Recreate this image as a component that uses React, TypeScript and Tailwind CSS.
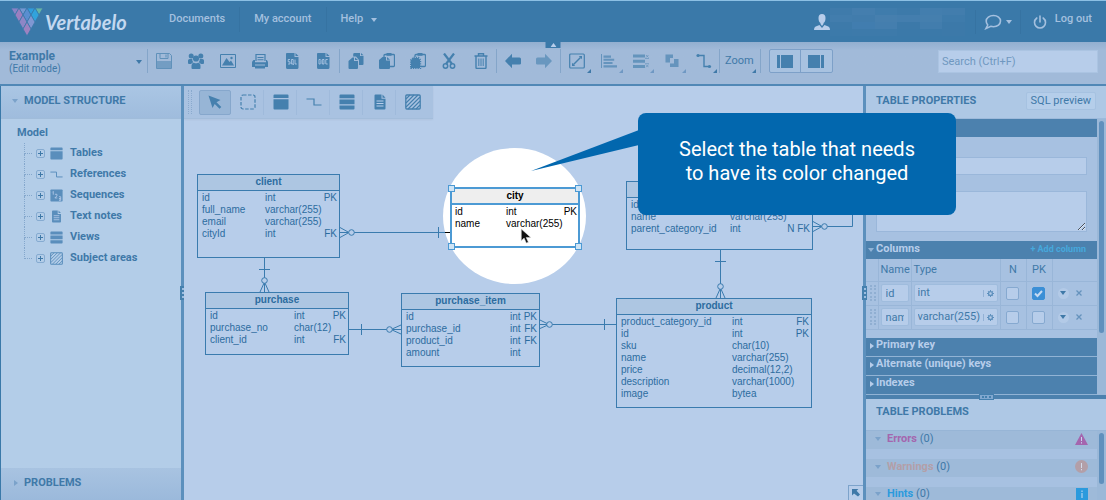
import { useState } from "react";
import type { ReactNode } from "react";

type IconName =
  | "save" | "users" | "image" | "print" | "sql" | "doc"
  | "copy" | "paste" | "pasteSpecial" | "cut" | "trash"
  | "undo" | "redo" | "line" | "align" | "distribute" | "arrange" | "route"
  | "pointer" | "marquee" | "table" | "reference" | "view" | "note" | "area" | "sequence";

// All icons are drawn on a 16x16 grid with currentColor
const ICONS: Record<IconName, ReactNode> = {
  save: (
    <g opacity=".7">
      <path d="M.5.5h13l2 2v13H.5z" fill="none" stroke="currentColor" />
      <path d="M1 8h14v7H1z" opacity=".7" />
      <path d="M4 .5v5h8v-5" fill="none" stroke="currentColor" />
      <path d="M9.5 1.5h1v3h-1z" />
    </g>
  ),
  users: (
    <>
      <circle cx="3.2" cy="3" r="2.5" />
      <circle cx="12.8" cy="3" r="2.5" />
      <circle cx="8" cy="5.5" r="3.1" />
      <path d="M0 10V7.5Q0 6 1.7 6h2.6Q4 9 5.5 9.3 3.6 9.8 3.2 11H1Q0 11 0 10zM16 10V7.5Q16 6 14.3 6h-2.6Q12 9 10.5 9.3 12.4 9.8 12.8 11H15Q16 11 16 10zM3.5 15v-2.5Q3.5 10 6 9.7 8 11 10 9.7q2.5.3 2.5 2.8V15q0 1-1 1h-7q-1 0-1-1z" />
    </>
  ),
  image: (
    <>
      <path d="M.5 1.5h15v13H.5z" fill="none" stroke="currentColor" />
      <path d="M2 12.5 6.500 5l3 4 1.500-1.500 3 5z" />
      <circle cx="11.5" cy="5" r="1.2" />
    </>
  ),
  print: (
    <>
      <path d="M4 8V1.500h9V8" fill="none" stroke="currentColor" strokeWidth="1.2" />
      <path d="M5.500 4h6v1h-6zM5.500 6.200h6v1h-6zM1.500 7H3v2.200h11V7h.8Q16 8 16 9.500V14H0V9.500Q0 8 1.500 7z" />
      <path d="M3 14h10v1.500H3z" />
      <path d="M3 11.500h10v1H3z" fill="#a1bad9" />
    </>
  ),
  sql: (
    <>
      <path d="M2.500 0h8v4h4v10.500Q14.500 16 13 16H3.500Q2 16 2 14.500V1.500Q2 0 2.500 0zM11.500 0l3 3h-3z" />
      <path d="M6 6.500H4.200v2.300H6V11H4M7.400 6.500h1.800V11H7.400zM9 11l.8 1M11 6.500V11h1.800" fill="none" stroke="#b7cdea" strokeWidth=".8" />
    </>
  ),
  doc: (
    <>
      <path d="M2.500 0h8v4h4v10.500Q14.500 16 13 16H3.500Q2 16 2 14.500V1.500Q2 0 2.500 0zM11.500 0l3 3h-3z" />
      <path d="M4 6.500h1.300l.6.8v3l-.6.7H4zM7.300 6.500H9V11H7.300zM12.700 6.500h-1.900V11h1.900" fill="none" stroke="#b7cdea" strokeWidth=".8" />
    </>
  ),
  copy: (
    <>
      <path d="M6.500 0H12v3h3.500v8q0 1-1 1H11V7L8 3.500H5.200V1.300Q5.200 0 6.500 0zM13 0l2.500 2.300H13z" />
      <path d="M4.500 4.500H6V8h4v7q0 1-1 1H1.500q-1 0-1-1V8zM7 4.500 10 7H7z" />
    </>
  ),
  paste: (
    <>
      <path d="M5 4V2.500Q5 1.500 6 1.500h8.500q1 0 1 1v10q0 1-1 1H11" fill="none" stroke="currentColor" strokeWidth="1.3" />
      <path d="M7.500 0h5v2.800h-5zM3.500 4H7v3.500h4V15q0 1-1 1H1q-1 0-1-1V7zM8 4l3 2.700H8z" />
    </>
  ),
  pasteSpecial: (
    <>
      <path d="M5 4V2.500Q5 1.500 6 1.500h8.500q1 0 1 1v10q0 1-1 1H11" fill="none" stroke="currentColor" strokeWidth="1.3" />
      <path d="M7.500 0h5v2.800h-5zM3.500 5h5l1.500 2v8H1V7z" />
      <path d="M3.500 4.500h5l2 2.500v8.500H.7V7z" fill="none" stroke="currentColor" strokeWidth="1.4" strokeDasharray="1.3 1" />
    </>
  ),
  cut: (
    <>
      <path d="M3 .5 11 11M13 .5 5 11" fill="none" stroke="currentColor" strokeWidth="2.2" />
      <circle cx="4.5" cy="13" r="2.2" fill="none" stroke="currentColor" strokeWidth="1.5" />
      <circle cx="11.5" cy="13" r="2.2" fill="none" stroke="currentColor" strokeWidth="1.5" />
    </>
  ),
  trash: (
    <>
      <path d="M1.500 3h13M5.500 3V.7h5V3M3 3v11.500q0 1 1 1h8q1 0 1-1V3" fill="none" stroke="currentColor" strokeWidth="1.4" />
      <path d="M5.800 5.500V13M8 5.500V13M10.200 5.500V13" stroke="currentColor" />
    </>
  ),
  undo: <path d="M0 8 7 .8V4.500h7.500Q16 4.500 16 6v4.500q0 1-1.500 1H7v3.700z" />,
  redo: <path d="M16 8 9 .8V4.500H1.500Q0 4.500 0 6v4.500q0 1 1.500 1H9v3.700z" opacity=".6" />,
  line: (
    <>
      <rect x=".7" y="1" width="14.6" height="14" rx="1" fill="none" stroke="currentColor" strokeWidth="1.2" />
      <path d="M4.500 11.500 11.500 4.500" fill="none" stroke="currentColor" strokeWidth="1.5" />
      <path d="M3 13v-3.200L6.200 13zM13 3v3.200L9.800 3z" />
    </>
  ),
  align: <path d="M0 1h1v14H0zM2.500 2.500H10v2.300H2.500zM2.500 5.800h10.700v2H2.500zM2.500 9h9v2h-9zM2.500 12.200H16v2.300H2.500z" opacity=".65" />,
  distribute: (
    <g opacity=".65">
      <path d="M0 1.500h12v3H0zM0 6.700h12v3H0zM0 12h12v3H0z" />
      <path d="M12 5.500h4M12 10.700h4M13 2l2.500 2.500M15.500 2 13 4.500M13 11.700l2.500 2.500M15.500 11.700 13 14.200" fill="none" stroke="currentColor" strokeWidth=".7" />
    </g>
  ),
  arrange: <path d="M1.500 1.500H9V5H6v4.500H1.500zM10 6h4.500v8H6v-3.500h4z" opacity=".65" />,
  route: (
    <>
      <path d="M2 2.500h6v11h5" fill="none" stroke="currentColor" strokeWidth="1.4" />
      <circle cx="2" cy="2.500" r="1.6" />
      <circle cx="13.5" cy="13.5" r="1.6" />
    </>
  ),
  pointer: <path d="m1.500 1.500 12 4.500-4 2.200 4.800 4.800-1.800 1.800-4.800-4.800L5.500 14z" />,
  marquee: <rect x="1" y="1" width="14" height="14" rx="2" fill="none" stroke="currentColor" strokeWidth="1.2" strokeDasharray="3.5 1.5" />,
  table: <path d="M1.500.5h13q1 0 1 1V4H.5V1.500q0-1 1-1zM.5 5.300h15v9.200q0 1-1 1h-13q-1 0-1-1z" />,
  reference: <path d="M.5 5h7.500v6h7.500" fill="none" stroke="currentColor" strokeWidth="1.2" />,
  view: <path d="M1.500.5h13q1 0 1 1V4.200H.5V1.500q0-1 1-1zM.5 5.500h15v4.700H.5zM.5 11.500h15v3q0 1-1 1h-13q-1 0-1-1z" />,
  note: (
    <>
      <path d="M3.500.5h6v4.300h4v9.700q0 1-1 1h-9q-1 0-1-1v-13q0-1 1-1zM10.500.5l3 3.200h-3z" />
      <path d="M4.500 7h7M4.500 9.500h7M4.500 12h7" stroke="#b7cdea" />
    </>
  ),
  area: (
    <>
      <rect x=".8" y="1" width="14.4" height="14" rx="1" fill="none" stroke="currentColor" strokeWidth="1.3" />
      <path d="m1 5 4-4M1 9l8-8M1 13l12-12M3 15 15 3M7 15l8-8M11 15l4-4" stroke="currentColor" strokeWidth="1.1" />
    </>
  ),
  sequence: (
    <>
      <rect x=".5" y=".5" width="15" height="15" rx="1" />
      <path d="M3 4l1-1v4M6 6.500h2.500v2L6 11h3M11 9.500h2.200V12H11h2.200v2H11" fill="none" stroke="#b7cdea" />
    </>
  ),
};

function Icon({ name, className = "h-4 w-4" }: { name: IconName; className?: string }) {
  return (
    <svg viewBox="0 0 16 16" fill="currentColor" className={className} aria-hidden="true">
      {ICONS[name]}
    </svg>
  );
}

function Caret({ className = "" }: { className?: string }) {
  return (
    <svg viewBox="0 0 6 4" fill="currentColor" className={`h-1 w-1.5 shrink-0 ${className}`} aria-hidden="true">
      <path d="M0 0h6L3 4z" />
    </svg>
  );
}

function CaretRight() {
  return (
    <svg viewBox="0 0 4 6" fill="currentColor" className="h-1.5 w-1 shrink-0" aria-hidden="true">
      <path d="M0 0v6l4-3z" />
    </svg>
  );
}

function ToolButton({ icon, label, width = "w-8", menu = "" }: { icon: IconName; label: string; width?: string; menu?: string }) {
  return (
    <button type="button" aria-label={label} className={`relative flex h-6 items-center justify-center text-[#4580ae] ${width}`}>
      <Icon name={icon} />
      {menu && (
        <svg viewBox="0 0 4 4" className={`absolute right-0.5 bottom-0 h-1 w-1 ${menu}`} fill="currentColor" aria-hidden="true">
          <path d="M4 0v4H0z" />
        </svg>
      )}
    </button>
  );
}

/* ---------- top bar ---------- */

const LOGO_TILES = [
  { points: "0,0 8,0 4,7", fill: "#8a83c6" },
  { points: "8,0 16,0 12,7", fill: "#7598d2" },
  { points: "16,0 24,0 20,7", fill: "#2f9ddd" },
  { points: "24,0 32,0 28,7", fill: "#68b4a4" },
  { points: "8,0 12,7 8,14 4,7", fill: "#9c7fc0" },
  { points: "16,0 20,7 16,14 12,7", fill: "#5a8ed0" },
  { points: "24,0 28,7 24,14 20,7", fill: "#31a3dc" },
  { points: "12,7 16,14 12,21 8,14", fill: "#8e86c6" },
  { points: "20,7 24,14 20,21 16,14", fill: "#7f97d2" },
  { points: "16,14 20,21 16,28 12,21", fill: "#9d82c0" },
];

const BLUR_BLOCKS = [
  "bg-[#3f7bab]", "bg-[#447eae]", "bg-[#3f7cac]", "bg-[#3d7aaa]", "bg-[#437eae]", "bg-[#427dad]",
  "bg-[#427dad]", "bg-[#417cac]", "bg-[#467fae]", "bg-[#447eae]", "bg-[#457fae]", "bg-[#3e7bab]",
  "bg-[#3d7aaa]", "bg-[#417daf]", "bg-[#447eae]", "bg-[#3c79a9]", "bg-[#427dad]", "bg-[#3c79a9]",
  "bg-[#3c7aaa]", "bg-[#3d7aaa]", "bg-[#3d7aaa]", "bg-[#3b79a9]", "bg-[#3b79a9]", "bg-[#3c79a9]",
];

function TopBar() {
  return (
    <header className="flex h-[42px] shrink-0 items-center border-t border-[#8cc0e4] bg-[#3a79a9] text-[#a4c0df]">
      <a href="#home" className="flex w-[155px] items-center gap-0.5 pl-[11px]">
        <svg viewBox="0 0 32 28" className="h-7 w-8 shrink-0" aria-hidden="true">
          {LOGO_TILES.map((tile) => (
            <polygon key={tile.points} points={tile.points} fill={tile.fill} stroke="#3a79a9" strokeWidth="0.8" />
          ))}
        </svg>
        <span className="font-[Lato,sans-serif] text-xl leading-6 font-bold text-[#c3d8f0] italic">Vertabelo</span>
      </a>
      <nav className="flex items-center pb-1 font-medium">
        <a href="#documents" className="border-r border-[#3673a2] px-3.5 py-1">Documents</a>
        <a href="#account" className="border-r border-[#3673a2] px-3.5 py-1">My account</a>
        <a href="#help" className="flex items-center gap-2 px-3.5 py-1">
          Help <Caret />
        </a>
      </nav>
      <div className="ml-auto flex items-center pr-3.5">
        <svg viewBox="0 0 16 16" fill="currentColor" className="h-4 w-4 text-[#b7cdea]" aria-hidden="true">
          <path d="M8 0q3.500 0 3.500 4T9.500 9v1L8 12l-1.500-2V9q-2-1-2-5T8 0zM0 16q0-3.500 3-4l2.500-1L8 14l2.500-3 2.500 1q3 .5 3 4z" />
        </svg>
        <div className="mr-2.5 grid w-[135px] grid-cols-6">
          {BLUR_BLOCKS.map((color, i) => (
            <span key={i} className={`h-[7px] ${color}`} />
          ))}
        </div>
        <button type="button" aria-label="Messages" className="flex items-center gap-1 border-x border-[#3673a2] px-2 py-1">
          <svg viewBox="0 0 18 16" className="h-4 w-[18px]" fill="none" stroke="currentColor" strokeWidth="1.6" aria-hidden="true">
            <path d="M9.500 1.500c4 0 7 2.300 7 5.500s-3 5.700-7 5.700q-1.500 0-2.700-.4L2 14.500l1.700-3.500Q2.200 9.300 2.200 7c0-3.200 3.300-5.500 7.300-5.500z" />
          </svg>
          <Caret />
        </button>
        <a href="#logout" className="flex items-center gap-2 pl-3 font-medium">
          <svg viewBox="0 0 14 14" className="h-3.5 w-3.5" fill="none" stroke="currentColor" strokeWidth="1.6" strokeLinecap="round" aria-hidden="true">
            <path d="M7 1v6M3.800 3Q1.500 4.700 1.500 7.500a5.500 5.500 0 0 0 11 0Q12.500 4.700 10.200 3" />
          </svg>
          <span className="pb-1">Log out</span>
        </a>
      </div>
    </header>
  );
}

function Toolbar() {
  return (
    <div className="relative flex h-11 shrink-0 items-center border-b-2 border-[#5188b6] bg-linear-to-b from-[#92afd0] via-[#a1bad9] via-20% to-[#a1bad9] pb-1">
      <button type="button" aria-label="Collapse header" className="absolute top-0 left-1/2 flex h-[6px] w-[15px] -translate-x-1/2 items-center justify-center bg-[#3a79a9] text-[#b7cdea]">
        <Caret className="rotate-180" />
      </button>
      <button type="button" className="flex w-[147px] items-center justify-between pt-0.5 pr-[5px] pl-[9px] text-left leading-3">
        <span>
          <span className="block text-xs leading-[14px] font-bold">Example</span>
          <span className="block text-[10px]">(Edit mode)</span>
        </span>
        <Caret />
      </button>
      <div className="flex border-x border-[#84a5c9]">
        <ToolButton icon="save" label="Save" />
        <ToolButton icon="users" label="Share" />
        <ToolButton icon="image" label="Export image" />
        <ToolButton icon="print" label="Print" />
        <ToolButton icon="sql" label="SQL script" width="w-[31px]" />
        <ToolButton icon="doc" label="Documentation" />
      </div>
      <div className="flex border-r border-[#84a5c9]">
        <ToolButton icon="copy" label="Copy" width="w-[31px]" />
        <ToolButton icon="paste" label="Paste" width="w-[31px]" />
        <ToolButton icon="pasteSpecial" label="Paste special" width="w-[31px]" />
        <ToolButton icon="cut" label="Cut" />
        <ToolButton icon="trash" label="Delete" width="w-[31px]" />
      </div>
      <div className="flex border-r border-[#84a5c9]">
        <ToolButton icon="undo" label="Undo" width="w-[31px]" />
        <ToolButton icon="redo" label="Redo" />
      </div>
      <div className="flex border-r border-[#84a5c9]">
        <ToolButton icon="line" label="Line style" menu="text-[#3f79a8]" />
        <ToolButton icon="align" label="Align" menu="text-[#6f98c3]" />
        <ToolButton icon="distribute" label="Distribute" width="w-[31px]" menu="text-[#6f98c3]" />
        <ToolButton icon="arrange" label="Arrange" menu="text-[#6f98c3]" />
        <ToolButton icon="route" label="Route" width="w-[31px]" menu="text-[#3f79a8]" />
      </div>
      <button type="button" className="relative h-6 border-r border-[#84a5c9] pr-1.5 pl-[5px]">
        Zoom
        <svg viewBox="0 0 4 4" className="absolute right-1 bottom-0 h-1 w-1" fill="currentColor" aria-hidden="true">
          <path d="M4 0v4H0z" />
        </svg>
      </button>
      <div className="ml-2 flex rounded-xs border border-[#7da0c8] bg-[#a8c2e0]">
        <button type="button" aria-label="Toggle left panel" className="flex h-[22px] w-[31px] items-center justify-center gap-px border-r border-[#7da0c8]">
          <span className="h-[13px] w-[3px] bg-[#4580ae]" />
          <span className="h-[13px] w-3 bg-[#4580ae]" />
        </button>
        <button type="button" aria-label="Toggle right panel" className="flex h-[22px] w-[31px] items-center justify-center gap-px">
          <span className="h-[13px] w-3 bg-[#4580ae]" />
          <span className="h-[13px] w-[3px] bg-[#4580ae]" />
        </button>
      </div>
      <input
        type="search"
        aria-label="Search"
        placeholder="Search (Ctrl+F)"
        className="mr-2 ml-auto h-[23px] w-40 border border-[#abc4e2] bg-[#b7cdea] px-[3px] placeholder:text-[#6f98c0]"
      />
    </div>
  );
}

/* ---------- left panel ---------- */

const TREE: { label: string; icon: IconName }[] = [
  { label: "Tables", icon: "table" },
  { label: "References", icon: "reference" },
  { label: "Sequences", icon: "sequence" },
  { label: "Text notes", icon: "note" },
  { label: "Views", icon: "view" },
  { label: "Subject areas", icon: "area" },
];

function ModelPanel() {
  return (
    <aside className="flex w-[181px] shrink-0 flex-col border-l border-[#3a79a9] bg-[#b3cde8]">
      <h2 className="flex h-[33px] shrink-0 items-center gap-1.5 border-b border-[#a0bcda] bg-linear-to-b from-[#aac6e4] to-[#9fbcdd] pb-0.5 pl-[11px] font-bold">
        <Caret className="text-[#7ba2ca]" /> MODEL STRUCTURE
      </h2>
      <div className="flex-1 pt-1.5">
        <p className="pl-4 leading-4 font-bold">Model</p>
        <ul className="ml-[23px] pt-0.5">
          {TREE.map((item, i) => (
            <li key={item.label} className="flex h-[21px] items-center font-bold">
              <span className="flex h-full w-2 flex-col">
                <span className="h-1/2 border-b border-l border-dotted border-[#84a7cc]" />
                {i < TREE.length - 1 && <span className="h-1/2 border-l border-dotted border-[#84a7cc]" />}
              </span>
              <button
                type="button"
                aria-label={`Expand ${item.label}`}
                className="ml-1 flex h-[9px] w-[9px] items-center justify-center rounded-xs border border-[#86abd1]"
              >
                <svg viewBox="0 0 5 5" className="h-[5px] w-[5px]" stroke="currentColor" aria-hidden="true">
                  <path d="M2.500 0v5M0 2.500h5" />
                </svg>
              </button>
              <Icon name={item.icon} className="mr-[7px] ml-[5px] h-[13px] w-[13px] text-[#5a8ebc]" />
              {item.label}
            </li>
          ))}
        </ul>
      </div>
      <h2 className="flex h-8 shrink-0 items-center gap-1.5 bg-linear-to-b from-[#a8c3e1] to-[#9bb9db] pb-0.5 pl-[13px] font-bold">
        <span className="text-[#7ba2ca]"><CaretRight /></span> PROBLEMS
      </h2>
    </aside>
  );
}

function Splitter() {
  return (
    <div className="flex w-[3px] shrink-0 items-center justify-center bg-[#5c90bd]">
      <span className="relative flex h-3.5 w-[5px] shrink-0 justify-center bg-[#4580ae] py-0.5">
        <span className="border-l-2 border-dotted border-[#9dbde0]" />
      </span>
    </div>
  );
}

/* ---------- canvas ---------- */

interface ModelTable {
  name: string;
  box: string;
  cols: string[];
  rows: string[][];
}

const MODEL_TABLES: ModelTable[] = [
  {
    name: "client",
    box: "left-[13px] top-[88px] h-[84px] w-[143px]",
    cols: ["w-[63px]", "", "w-4"],
    rows: [["id", "int", "PK"], ["full_name", "varchar(255)", ""], ["email", "varchar(255)", ""], ["cityId", "int", "FK"]],
  },
  {
    name: "purchase",
    box: "left-[21px] top-[206px] h-[63px] w-[144px]",
    cols: ["w-[84px]", "", "w-4"],
    rows: [["id", "int", "PK"], ["purchase_no", "char(12)", ""], ["client_id", "int", "FK"]],
  },
  {
    name: "purchase_item",
    box: "left-[217px] top-[207px] h-[74px] w-[139px]",
    cols: ["w-[104px]", "", "w-4"],
    rows: [["id", "int", "PK"], ["purchase_id", "int", "FK"], ["product_id", "int", "FK"], ["amount", "int", ""]],
  },
  {
    name: "category",
    box: "left-[442px] top-[95px] h-[69px] w-[187px]",
    cols: ["w-[99px]", "", "w-6"],
    rows: [["id", "int", "PK"], ["name", "varchar(255)", ""], ["parent_category_id", "int", "N FK"]],
  },
  {
    name: "product",
    box: "left-[432px] top-[212px] h-[110px] w-[196px]",
    cols: ["w-[111px]", "", "w-4"],
    rows: [
      ["product_category_id", "int", "FK"],
      ["id", "int", "PK"],
      ["sku", "char(10)", ""],
      ["name", "varchar(255)", ""],
      ["price", "decimal(12,2)", ""],
      ["description", "varchar(1000)", ""],
      ["image", "bytea", ""],
    ],
  },
];

function TableRows({ table }: { table: ModelTable }) {
  return (
    <table className="mt-px w-full table-fixed leading-3 whitespace-nowrap">
      <colgroup>
        {table.cols.map((width, i) => (
          <col key={i} className={width} />
        ))}
      </colgroup>
      <tbody>
        {table.rows.map(([name, type, key]) => (
          <tr key={name}>
            <td className="p-0">{name}</td>
            <td className="p-0">{type}</td>
            <td className="p-0 text-right">{key}</td>
          </tr>
        ))}
      </tbody>
    </table>
  );
}

const CITY: ModelTable = {
  name: "city",
  box: "left-[266px] top-[101px] h-[61px] w-[130px]",
  cols: ["w-[51px]", "", "w-4"],
  rows: [["id", "int", "PK"], ["name", "varchar(255)", ""]],
};

const HANDLES = ["-left-1 -top-1", "-right-1 -top-1", "-left-1 -bottom-1", "-right-1 -bottom-1"];

function Diagram() {
  return (
    <div className="absolute inset-0 font-['Liberation_Sans',sans-serif] text-[10px] text-[#2c6c9f]">
      <svg className="absolute inset-0 h-full w-full" fill="none" stroke="#3a7bae" aria-hidden="true">
        <ellipse cx="330.5" cy="130" rx="71.5" ry="68" fill="#fff" stroke="none" />
        {/* client - city */}
        <path d="M156 146.500h106M156 141.500l9 5-9 5M254.500 141v11" />
        <path d="M261 146.500h5" stroke="#000" />
        <circle cx="167.5" cy="146.5" r="2.8" fill="#b7cdea" />
        {/* client - purchase */}
        <path d="M80.500 172v34M75 183.500h11M76 206l4.500-10 4.500 10" />
        <circle cx="80.5" cy="194.5" r="2.8" fill="#b7cdea" />
        {/* purchase - purchase_item */}
        <path d="M165 243.500h52M177.500 238v11M217 239l-10 4.500 10 4.500" />
        <circle cx="205.5" cy="243.5" r="2.8" fill="#b7cdea" />
        {/* purchase_item - product */}
        <path d="M356 238.500h76M420.500 233v11M356 234l9 4.500-9 4" />
        <circle cx="365.5" cy="238.5" r="2.8" fill="#b7cdea" />
        {/* category - product */}
        <path d="M536.500 164v48M531 175.500h11M532 212l4.500-10 4.500 10" />
        <circle cx="536.5" cy="200.5" r="2.8" fill="#b7cdea" />
        {/* category - parent category */}
        <path d="M629 140.500h39.500v-30H629M629 135.500l9 5-9 5" />
        <circle cx="640.5" cy="140.5" r="2.8" fill="#b7cdea" />
      </svg>

      {MODEL_TABLES.map((table) => (
        <section key={table.name} className={`absolute border border-[#3a7bae] bg-[#b7cdea] ${table.box}`}>
          <h3 className="h-4 border-b border-[#3a7bae] bg-[#adc6e2] text-center leading-[13px] font-bold">{table.name}</h3>
          <div className="pr-0.5 pl-1">
            <TableRows table={table} />
          </div>
        </section>
      ))}

      <section className={`absolute border-2 border-[#4c9ad4] bg-white text-black ${CITY.box}`}>
        <h3 className="h-4 border-b-2 border-[#4c9ad4] bg-[#eee] text-center leading-[13px] font-bold">city</h3>
        <div className="pr-px pl-[3px]">
          <TableRows table={CITY} />
        </div>
        {HANDLES.map((corner) => (
          <span key={corner} className={`absolute h-[7px] w-[7px] border border-[#4c9ad4] bg-[#cfe4f5] ${corner}`} />
        ))}
      </section>

      <svg viewBox="0 0 12 18" className="absolute top-[142px] left-[336px] h-[17px] w-3" aria-hidden="true">
        <path d="M1 1v12.500l3-2.800L6.300 16l2.200-1-2.300-5H11z" fill="#111" stroke="#ddd" strokeWidth=".6" />
      </svg>
    </div>
  );
}

const PALETTE: { label: string; icon: IconName }[] = [
  { label: "Select", icon: "pointer" },
  { label: "Select area", icon: "marquee" },
  { label: "Add table", icon: "table" },
  { label: "Add reference", icon: "reference" },
  { label: "Add view", icon: "view" },
  { label: "Add note", icon: "note" },
  { label: "Add subject area", icon: "area" },
];

function Canvas() {
  const [tool, setTool] = useState("Select");

  return (
    <main className="relative flex flex-1 flex-col justify-between overflow-hidden bg-[#b7cdea]">
      <Diagram />
      <div className="relative flex h-[33px] items-center gap-px self-start border-b border-[#a3bddb] bg-[#a9c2e1] px-1 text-[#4580ae] shadow-xs">
        <span className="mr-1.5 h-6 w-1 border-x border-dotted border-[#8aaace]" />
        {PALETTE.map((item) => (
          <button
            key={item.label}
            type="button"
            aria-label={item.label}
            onClick={() => setTool(item.label)}
            className={
              tool === item.label
                ? "flex h-[25px] w-8 items-center justify-center rounded-xs border border-[#86a7cc] bg-[#97b5d6]"
                : "flex h-[25px] w-8 items-center justify-center border-r border-[#9fbadb] last:border-r-0"
            }
          >
            <Icon name={item.icon} />
          </button>
        ))}
      </div>
      <button type="button" aria-label="Show overview" className="relative flex h-[15px] w-[15px] items-center justify-center self-end border-t border-l border-[#7da3cb]">
        <svg viewBox="0 0 10 10" fill="currentColor" className="h-2 w-2" aria-hidden="true">
          <path d="M0 0h8L5.700 2.300 10 7 7.500 9.500 2.500 5.500 0 8z" />
        </svg>
      </button>
    </main>
  );
}

/* ---------- right panel ---------- */

const COLUMNS = [
  { name: "id", type: "int", pk: true },
  { name: "name", type: "varchar(255)", pk: false },
];

function CheckBox({ label, defaultChecked = false }: { label: string; defaultChecked?: boolean }) {
  return (
    <input
      type="checkbox"
      aria-label={label}
      defaultChecked={defaultChecked}
      className="block h-[13px] w-[13px] appearance-none rounded-xs border border-[#86a9d0] bg-[#b7cdea] checked:border-[#3b8fd6] checked:bg-[#3b8fd6]"
    />
  );
}

function ColumnsTable() {
  return (
    <table className="mb-2 w-full table-fixed text-left">
      <colgroup>
        <col className="w-3" />
        <col className="w-[33px]" />
        <col className="w-[89px]" />
        <col className="w-[26px]" />
        <col className="w-[26px]" />
        <col />
      </colgroup>
      <thead>
        <tr className="h-[22px]">
          <th className="p-0" aria-label="Order" />
          <th className="border-l border-[#99b6d8] p-0 pl-0.5 font-normal">Name</th>
          <th className="border-l border-[#99b6d8] p-0 pl-0.5 font-normal">Type</th>
          <th className="border-l border-[#99b6d8] p-0 text-center font-normal">N</th>
          <th className="border-l border-[#99b6d8] p-0 text-center font-normal">PK</th>
          <th className="border-l border-[#99b6d8] p-0" aria-label="Actions" />
        </tr>
      </thead>
      <tbody>
        {COLUMNS.map((column) => (
          <tr key={column.name} className="h-6 border-y border-[#99b6d8]">
            <td className="p-0 pl-1">
              <span className="block h-4 w-1.5 border-x-2 border-dotted border-[#90afd2]" />
            </td>
            <td className="border-l border-[#99b6d8] p-0 px-0.5">
              <input aria-label="Column name" defaultValue={column.name} className="block h-[18px] w-full rounded-xs border border-[#9fbcdd] bg-[#b7cdea] px-1" />
            </td>
            <td className="border-l border-[#99b6d8] p-0 px-0.5">
              <div className="flex h-[18px] items-center rounded-xs border border-[#9fbcdd] bg-[#b7cdea]">
                <input aria-label="Column type" defaultValue={column.type} className="w-0 flex-1 pl-[3px]" />
                <button type="button" aria-label="Edit type" className="flex w-3.5 items-center justify-center border-l border-[#93b1d5]">
                  <svg viewBox="0 0 8 8" className="h-[7px] w-[7px]" fill="none" stroke="#5e90bd" aria-hidden="true">
                    <circle cx="4" cy="4" r="2.2" strokeWidth="1.5" />
                    <path d="M4 0v1.200M4 6.800V8M0 4h1.200M6.800 4H8M1.200 1.200l.8.8M6 6l.8.8M6.800 1.200 6 2M2 6l-.8.8" strokeWidth="1.2" />
                  </svg>
                </button>
              </div>
            </td>
            <td className="border-l border-[#99b6d8] p-0 pl-[5px]">
              <CheckBox label={`${column.name} nullable`} />
            </td>
            <td className="border-l border-[#99b6d8] p-0 pl-[5px]">
              <span className="relative block">
                <CheckBox label={`${column.name} primary key`} defaultChecked={column.pk} />
                {column.pk && (
                  <svg viewBox="0 0 13 13" className="pointer-events-none absolute top-0 left-0 h-[13px] w-[13px]" fill="none" stroke="#c5daf2" strokeWidth="2" aria-hidden="true">
                    <path d="m3 6.500 2.500 2.500L10 4" />
                  </svg>
                )}
              </span>
            </td>
            <td className="border-l border-[#99b6d8] p-0 pl-[5px]">
              <span className="flex items-center gap-[7px]">
                <button type="button" aria-label="Column details" className="flex h-[11px] w-[11px] items-center justify-center rounded-full bg-[#b3cae7]">
                  <Caret />
                </button>
                <button type="button" aria-label="Remove column">
                  <svg viewBox="0 0 6 6" className="h-1.5 w-1.5" stroke="#6592bd" strokeWidth="1.3" aria-hidden="true">
                    <path d="m.5.5 5 5M5.500.5l-5 5" />
                  </svg>
                </button>
              </span>
            </td>
          </tr>
        ))}
      </tbody>
    </table>
  );
}

const SECTIONS = ["Primary key", "Alternate (unique) keys", "Indexes"];

function PropertiesPanel() {
  return (
    <aside className="flex w-60 shrink-0 flex-col bg-[#a7c1e1]">
      <div className="flex h-[33px] shrink-0 items-center justify-between border-b border-[#9dbadb] bg-[#aec8e5] pr-2.5 pb-0.5 pl-2.5">
        <h2 className="font-bold">TABLE PROPERTIES</h2>
        <button type="button" className="rounded-xs border border-[#a6c2e1] bg-[#b5ceea] px-1 leading-4">SQL preview</button>
      </div>
      <div className="flex shrink-0">
        <div className="flex-1">
          <div className="h-[18px] bg-[#4c81ae]" />
          <div className="flex flex-col px-2.5 pt-5 pb-[9px]">
            <input aria-label="Table name" defaultValue="city" className="mb-4 h-[18px] border border-[#9ab7da] bg-[#b7cdea] px-1" />
            <textarea aria-label="Comment" className="h-[41px] resize-y border border-[#9ab7da] bg-[#b7cdea] px-1" />
          </div>
          <h3 className="flex h-[18px] items-center gap-0.5 bg-[#4c81ae] pr-[11px] pb-px pl-0.5 font-bold text-[#b7cdea]">
            <Caret className="text-[#90b3d6]" /> Columns
            <button type="button" className="ml-auto text-[9px] text-[#46a8dc]">+ Add column</button>
          </h3>
          <ColumnsTable />
          {SECTIONS.map((title) => (
            <h3 key={title} className="flex h-[19px] items-center gap-0.5 border-b border-[#91b3d5] bg-[#4c81ae] pb-0.5 pl-1 font-bold text-[#b7cdea]">
              <CaretRight /> {title}
            </h3>
          ))}
        </div>
        <div className="w-[9px] bg-[#9bb8d8] px-0.5 pt-0.5">
          <div className="h-[212px] rounded-full bg-[#6090bd]" />
        </div>
      </div>
      <div className="flex h-1 shrink-0 items-center justify-center bg-[#4c81ae]">
        <span className="relative flex h-[6px] w-[15px] shrink-0 flex-col justify-center border border-[#4580ae] bg-[#82a8d0] px-0.5">
          <span className="border-t-2 border-dotted border-[#4580ae]" />
        </span>
      </div>
      <h2 className="flex h-8 shrink-0 items-center border-b border-[#97b5d6] bg-[#aec8e5] pb-1 pl-2.5 font-bold">TABLE PROBLEMS</h2>
      <div className="flex min-h-0 flex-1 overflow-hidden">
        <ul className="flex flex-1 flex-col gap-2.5 leading-3">
          <li className="flex h-[18px] shrink-0 items-center gap-1.5 bg-[#9ebad9] px-[9px] pb-0.5">
            <Caret className="text-[#7ba2ca]" />
            <span><b className="text-[#a466ae]">Errors</b> (0)</span>
            <svg viewBox="0 0 13 12" className="ml-auto h-3 w-[13px]" aria-hidden="true">
              <path d="M6.500 0 13 12H0z" fill="#a466ae" />
              <path d="M6.500 4v4M6.500 9.200v1.300" stroke="#c9d6ee" />
            </svg>
          </li>
          <li className="flex h-[18px] shrink-0 items-center gap-1.5 bg-[#9ebad9] px-[9px] pb-0.5">
            <Caret className="text-[#7ba2ca]" />
            <span><b className="text-[#b39fa8]">Warnings</b> (0)</span>
            <svg viewBox="0 0 13 13" className="ml-auto h-[13px] w-[13px]" aria-hidden="true">
              <circle cx="6.5" cy="6.5" r="6.5" fill="#b39fa8" />
              <path d="M6.500 3v5M6.500 9v1.300" stroke="#d3dcec" />
            </svg>
          </li>
          <li className="flex h-[18px] shrink-0 items-center gap-1.5 bg-[#9ebad9] px-[9px] pb-1">
            <Caret className="text-[#7ba2ca]" />
            <span><b className="text-[#2b9add]">Hints</b> (0)</span>
            <svg viewBox="0 0 12 12" className="ml-auto h-3 w-3" aria-hidden="true">
              <path d="M0 0h12v12H0z" fill="#2b9add" />
              <path d="M6 2.500V4M6 5v5" stroke="#c9dcf2" />
            </svg>
          </li>
        </ul>
        <div className="w-[9px] bg-[#9bb8d8] px-0.5 pt-0.5">
          <div className="h-[51px] rounded-full bg-[#6090bd]" />
        </div>
      </div>
    </aside>
  );
}

function Callout() {
  return (
    <div role="note" className="absolute top-[27px] left-[531px] flex">
      <svg viewBox="0 0 108 60" className="h-[60px] w-[108px]" fill="#0267ae" aria-hidden="true">
        <path d="M108 17v15L0 58z" />
      </svg>
      <p className="-ml-px h-[102px] w-[318px] rounded-lg bg-[#0267ae] pt-6 text-center text-xl leading-6 text-white">
        Select the table that needs
        <br />
        to have its color changed
      </p>
    </div>
  );
}

export default function App() {
  return (
    <div className="flex h-screen flex-col overflow-hidden bg-[#b7cdea] font-[Roboto,sans-serif] text-[11px] text-[#3f79a8]">
      <TopBar />
      <Toolbar />
      <div className="relative flex min-h-0 flex-1">
        <ModelPanel />
        <Splitter />
        <Canvas />
        <Splitter />
        <PropertiesPanel />
        <Callout />
      </div>
    </div>
  );
}
